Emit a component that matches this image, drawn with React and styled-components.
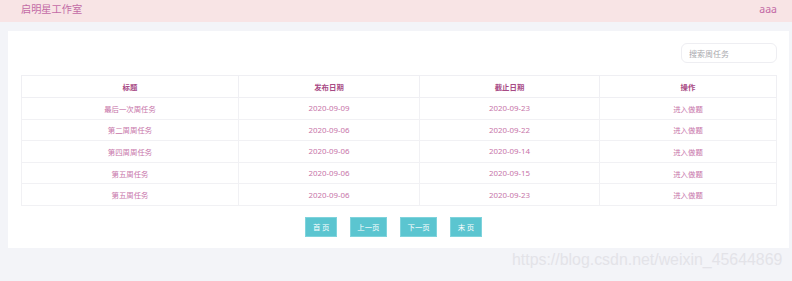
import styled, { createGlobalStyle } from "styled-components";

const Global = createGlobalStyle`
  html, body {
    margin: 0;
    padding: 0;
    background: #f3f4f8;
    font-family: "Noto Sans", "Noto Sans CJK SC", sans-serif;
  }
`;

const rows = [
  { title: "最后一次周任务", start: "2020-09-09", end: "2020-09-23" },
  { title: "第二周周任务", start: "2020-09-06", end: "2020-09-22" },
  { title: "第四周周任务", start: "2020-09-06", end: "2020-09-14" },
  { title: "第五周任务", start: "2020-09-06", end: "2020-09-15" },
  { title: "第五周任务", start: "2020-09-06", end: "2020-09-23" },
];

export default function App() {
  return (
    <Page>
      <Global />
      <Header>
        <Brand>启明星工作室</Brand>
        <User>aaa</User>
      </Header>
      <Main>
        <Card>
          <Toolbar>
            <Search placeholder="搜索周任务" />
          </Toolbar>
          <Table>
            <colgroup>
              <col style={{ width: 217 }} />
              <col style={{ width: 181 }} />
              <col style={{ width: 180 }} />
              <col />
            </colgroup>
            <thead>
              <tr>
                <Th>标题</Th>
                <Th>发布日期</Th>
                <Th>截止日期</Th>
                <Th>操作</Th>
              </tr>
            </thead>
            <tbody>
              {rows.map((r, i) => (
                <tr key={i}>
                  <Td>{r.title}</Td>
                  <Td $date>{r.start}</Td>
                  <Td $date>{r.end}</Td>
                  <Td>进入做题</Td>
                </tr>
              ))}
            </tbody>
          </Table>
          <Pager>
            <PageBtn>首 页</PageBtn>
            <PageBtn>上一页</PageBtn>
            <PageBtn>下一页</PageBtn>
            <PageBtn>末 页</PageBtn>
          </Pager>
        </Card>
      </Main>
      <Watermark>https://blog.csdn.net/weixin_45644869</Watermark>
    </Page>
  );
}

const Page = styled.div`
  position: relative;
  width: 792px;
  height: 281px;
  overflow: hidden;
`;

const Header = styled.header`
  height: 22px;
  background: #f8e4e5;
  display: flex;
  align-items: center;
  justify-content: space-between;
  padding: 0 15px 0 21px;
  color: #c36ba5;
`;

const Brand = styled.div`
  font-size: 10.2px;
  line-height: 1;
  margin-top: -4px;
`;

const User = styled.div`
  font-size: 10.5px;
  font-family: "Noto Sans", sans-serif;
  line-height: 1;
  margin-top: -4px;
`;

const Main = styled.main`
  padding: 9px 3px 0 8px;
`;

const Card = styled.section`
  background: #fff;
  padding: 12px 12px 12px 13px;
  height: 217px;
  box-sizing: border-box;
`;

const Toolbar = styled.div`
  display: flex;
  justify-content: flex-end;
`;

const Search = styled.input`
  width: 96px;
  height: 20px;
  box-sizing: border-box;
  border: 1px solid #eeeef2;
  border-radius: 6px;
  padding: 0 7px;
  font-size: 8px;
  font-family: "Noto Sans CJK SC", sans-serif;
  outline: none;
  &::placeholder {
    color: #a9a9ad;
  }
`;

const Table = styled.table`
  width: 756px;
  margin-top: 12px;
  border-collapse: collapse;
  table-layout: fixed;
  border: 1px solid #efeff3;
`;

const Th = styled.th`
  height: 21px;
  padding: 0;
  font-size: 7.4px;
  font-weight: 600;
  color: #a84a85;
  border: 1px solid #efeff3;
  text-align: center;
`;

const Td = styled.td`
  height: 20.6px;
  padding: 0;
  font-size: ${(p) => (p.$date ? "7.9px" : "7.4px")};
  color: #c774a9;
  border: 1px solid #f1f1f4;
  text-align: center;
`;

const Pager = styled.div`
  display: flex;
  justify-content: center;
  gap: 13px;
  margin-top: 11px;
  padding-right: 11px;
`;

const PageBtn = styled.button`
  height: 20px;
  padding: 0 6.5px;
  border: 1px solid #7fd3dc;
  background: #5bc5d0;
  color: #fff;
  font-size: 7.4px;
  font-family: "Noto Sans CJK SC", sans-serif;
  cursor: pointer;
`;

const Watermark = styled.div`
  position: absolute;
  left: 512px;
  top: 251px;
  font-family: "Liberation Sans", Arial, sans-serif;
  font-size: 15.9px;
  color: #e3e3e8;
  white-space: nowrap;
`;
